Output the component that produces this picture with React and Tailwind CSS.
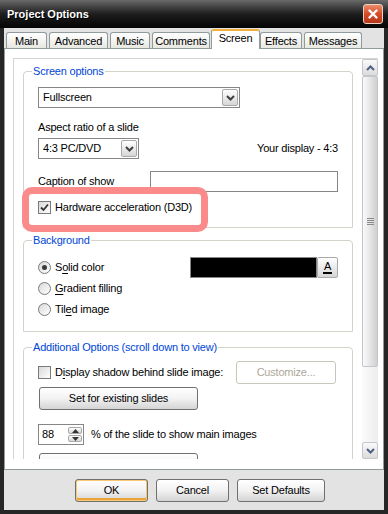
import React from 'react';

const tabs = [
    { label: 'Main', w: 'w-[41px]', ml: 'ml-[2px]' },
    { label: 'Advanced', w: 'w-[59px]', ml: 'ml-[2px]' },
    { label: 'Music', w: 'w-[40px]', ml: 'ml-[2px]' },
    { label: 'Comments', w: 'w-[58px]', ml: 'ml-[2px]' },
    { label: 'Screen', w: 'w-[49px]', ml: 'ml-[1px]', active: true },
    { label: 'Effects', w: 'w-[42px]', ml: 'ml-0' },
    { label: 'Messages', w: 'w-[58px]', ml: 'ml-[2px]' },
];

const Chevron = ({ up, color = '#404040' }) => (
    <svg width="9" height="6" viewBox="0 0 9 6">
        <path d={up ? 'M1 5 L4.5 1.5 L8 5' : 'M1 1 L4.5 4.5 L8 1'} fill="none" stroke={color} strokeWidth="2" />
    </svg>
);

const Select = ({ value, className }) => (
    <div className={`h-[21px] flex items-stretch border border-[#868686] bg-white ${className}`}>
        <span className="flex-1 pl-[4px] flex items-center">{value}</span>
        <div className="w-[16px] m-[1px] rounded-[2px] border border-[#a9a9a9] bg-gradient-to-b from-white to-[#d6d6d6] flex items-center justify-center">
            <Chevron />
        </div>
    </div>
);

const Checkbox = ({ checked }) => (
    <div className="w-[13px] h-[13px] shrink-0 border border-[#7a7a7a] bg-gradient-to-br from-[#d8d8d8] to-white flex items-center justify-center">
        {checked && (
            <svg width="11" height="11" viewBox="0 0 11 11">
                <path d="M2 5.5 L4.5 8 L9 2.5" fill="none" stroke="#333" strokeWidth="1.8" />
            </svg>
        )}
    </div>
);

const Radio = ({ checked }) => (
    <div className="w-[13px] h-[13px] shrink-0 rounded-full border border-[#7a7a7a] bg-gradient-to-br from-[#d8d8d8] to-white flex items-center justify-center">
        {checked && <div className="w-[5px] h-[5px] rounded-full bg-[#3a3a3a]" />}
    </div>
);

const Button = ({ children, className = '', disabled }) => (
    <div
        className={`h-[23px] rounded-[3px] border flex items-center justify-center ${
            disabled
                ? 'border-[#c9c7ba] bg-white text-[#aca899]'
                : 'border-[#707070] bg-gradient-to-b from-white via-[#f2f2f2] to-[#d4d4d4]'
        } ${className}`}
    >
        {children}
    </div>
);

const Group = ({ title, className = '', children }) => (
    <div className={`border border-[#d3d3cc] rounded-t-[4px] px-[14px] ${className}`}>
        <div className="-mt-[7px] -ml-[6px] w-fit px-[1px] bg-white text-[#0046d5]">{title}</div>
        {children}
    </div>
);

const U = ({ children }) => <span className="underline underline-offset-2">{children}</span>;

export default function App() {
    return (
        <div className="w-[388px] h-[514px] flex flex-col bg-[#262626] font-['Liberation_Sans',Arial,sans-serif] text-[11px] leading-[13px] tracking-[-0.2px] text-black overflow-hidden">
            {/* Title bar */}
            <div className="h-[28px] shrink-0 flex items-center justify-between pl-[7px] pr-[5px] bg-gradient-to-b from-[#6a6a6a] via-[#1e1e1e] to-[#050505]">
                <span className="text-white font-bold tracking-[0px] [text-shadow:1px_1px_0_#000]">Project Options</span>
                <div className="w-[20px] h-[20px] rounded-[3px] border border-[#f0d0c6] bg-gradient-to-b from-[#ea8a6a] via-[#d44b26] to-[#b5381a] flex items-center justify-center">
                    <svg width="12" height="12" viewBox="0 0 12 12">
                        <path d="M2.5 2.5 L9.5 9.5 M9.5 2.5 L2.5 9.5" stroke="white" strokeWidth="2.4" strokeLinecap="round" />
                    </svg>
                </div>
            </div>

            {/* Body */}
            <div className="flex-1 mx-[4px] mb-[4px] bg-[#e3e3e3] flex flex-col">
                {/* Tabs */}
                <div className="h-[20px] shrink-0 flex items-end">
                    {tabs.map((t) => (
                        <div
                            key={t.label}
                            className={`${t.w} ${t.ml} flex items-center justify-center rounded-t-[3px] border-x border-[#919b9c] ${
                                t.active
                                    ? 'relative z-10 h-[20px] -mb-[1px] bg-white border-t-2 border-t-[#f2b03a] pb-[3px]'
                                    : 'h-[16px] border-t bg-gradient-to-b from-white to-[#e8e8e2] pt-[1px]'
                            }`}
                        >
                            {t.label}
                        </div>
                    ))}
                </div>

                {/* Tab panel */}
                <div className="h-[422px] shrink-0 border border-[#919b9c] bg-white pl-[8px] pt-[9px]">
                    <div className="w-[365px] h-[401px] flex border-l border-t border-[#d4d4d4]">
                        {/* Scroll content */}
                        <div className="w-[348px] h-[400px] overflow-hidden pl-[9px] pt-[12px]">
                            <Group title="Screen options" className="w-[330px] pb-[13px]">
                                <Select value="Fullscreen" className="mt-[9px] w-[202px]" />
                                <div className="mt-[13px]">Aspect ratio of a slide</div>
                                <div className="mt-[4px] flex items-center justify-between">
                                    <Select value="4:3 PC/DVD" className="w-[101px]" />
                                    <span>Your display - 4:3</span>
                                </div>
                                <div className="mt-[12px] flex items-center justify-between">
                                    <span>
                                        C<U>a</U>ption of show
                                    </span>
                                    <div className="w-[188px] h-[21px] border border-[#868686] bg-white" />
                                </div>
                                <div className="relative mt-[9px] flex items-center gap-[4px]">
                                    <Checkbox checked />
                                    <span>Hardware acceleration (D3D)</span>
                                    <div className="absolute -left-[16px] -top-[14px] w-[186px] h-[45px] rounded-[10px] border-[7px] border-[#fb8b8b] pointer-events-none" />
                                </div>
                            </Group>

                            <Group title="Background" className="w-[330px] mt-[12px] pb-[11px]">
                                <div className="mt-[10px] h-[21px] flex items-center">
                                    <Radio checked />
                                    <span className="ml-[4px]">
                                        S<U>o</U>lid color
                                    </span>
                                    <div className="ml-auto w-[127px] h-[21px] bg-black border border-[#868686]" />
                                    <div className="w-[21px] h-[21px] rounded-[2px] border border-[#a9a9a9] bg-gradient-to-b from-white to-[#d6d6d6] flex flex-col items-center justify-center">
                                        <span className="text-[11px] leading-[10px]">A</span>
                                        <div className="w-[9px] h-[2px] bg-black mt-[1px]" />
                                    </div>
                                </div>
                                <div className="h-[21px] flex items-center">
                                    <Radio />
                                    <span className="ml-[4px]">
                                        <U>G</U>radient filling
                                    </span>
                                </div>
                                <div className="h-[21px] flex items-center">
                                    <Radio />
                                    <span className="ml-[4px]">
                                        Til<U>e</U>d image
                                    </span>
                                </div>
                            </Group>

                            <Group title="Additional Options (scroll down to view)" className="w-[330px] mt-[15px] pb-[40px]">
                                <div className="mt-[7px] h-[23px] flex items-center">
                                    <Checkbox />
                                    <span className="ml-[4px]">
                                        D<U>i</U>splay shadow behind slide image:
                                    </span>
                                    <Button disabled className="ml-auto mr-[2px] w-[100px]">
                                        Customize...
                                    </Button>
                                </div>
                                <Button className="mt-[3px] w-[159px] ml-[1px]">Set for existing slides</Button>
                                <div className="mt-[14px] h-[21px] flex items-center">
                                    <div className="w-[46px] h-[21px] border border-[#868686] bg-white flex items-center">
                                        <span className="pl-[3px] flex-1">88</span>
                                        <div className="w-[14px] h-[15px] mr-[1px] flex flex-col gap-[1px]">
                                            <div className="flex-1 rounded-[2px] border border-[#a9a9a9] bg-gradient-to-b from-white to-[#d6d6d6] flex items-center justify-center">
                                                <svg width="7" height="4" viewBox="0 0 7 4">
                                                    <path d="M0 4 L3.5 0 L7 4 Z" fill="#333" />
                                                </svg>
                                            </div>
                                            <div className="flex-1 rounded-[2px] border border-[#a9a9a9] bg-gradient-to-b from-white to-[#d6d6d6] flex items-center justify-center">
                                                <svg width="7" height="4" viewBox="0 0 7 4">
                                                    <path d="M0 0 L3.5 4 L7 0 Z" fill="#333" />
                                                </svg>
                                            </div>
                                        </div>
                                    </div>
                                    <span className="ml-[7px]">% of the slide to show main images</span>
                                </div>
                                <Button className="mt-[8px] w-[159px] ml-[1px]" />
                            </Group>
                        </div>

                        {/* Scrollbar */}
                        <div className="w-[16px] h-[400px] flex flex-col bg-gradient-to-r from-[#fbfbfb] to-[#ededed]">
                            <div className="h-[17px] rounded-[2px] border border-[#c4c6cc] bg-gradient-to-b from-[#fafafa] to-[#dcdcdc] flex items-center justify-center">
                                <Chevron up color="#4d6185" />
                            </div>
                            <div className="h-[291px] rounded-[2px] border border-[#c4c6cc] bg-gradient-to-r from-[#fafafa] via-[#e6e6e6] to-[#cfcfcf] flex flex-col items-center justify-center gap-[1px]">
                                <div className="w-[7px] h-px bg-[#8a8a8a]" />
                                <div className="w-[7px] h-px bg-[#8a8a8a]" />
                                <div className="w-[7px] h-px bg-[#8a8a8a]" />
                                <div className="w-[7px] h-px bg-[#8a8a8a]" />
                            </div>
                            <div className="flex-1" />
                            <div className="h-[17px] rounded-[2px] border border-[#c4c6cc] bg-gradient-to-b from-[#fafafa] to-[#dcdcdc] flex items-center justify-center">
                                <Chevron color="#4d6185" />
                            </div>
                        </div>
                    </div>
                </div>

                {/* Dialog buttons */}
                <div className="flex-1 flex items-start pt-[9px] pl-[71px] gap-[8px]">
                    <Button className="w-[73px] border-[#6a5a3a] shadow-[inset_0_0_0_1px_#f9c871,inset_0_-2px_0_1px_#eba33c]">OK</Button>
                    <Button className="w-[73px]">Cancel</Button>
                    <Button className="w-[88px]">Set Defaults</Button>
                </div>
            </div>
        </div>
    );
}
